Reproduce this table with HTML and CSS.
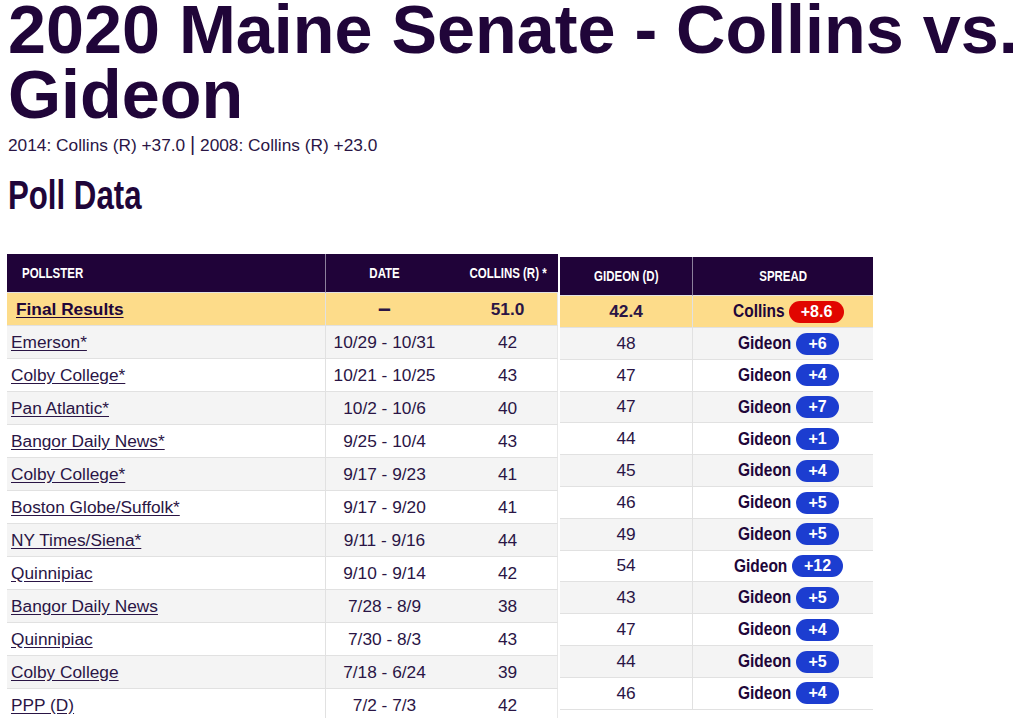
FILE: index.html
```html
<!DOCTYPE html>
<html lang="en">
<head>
<meta charset="utf-8">
<title>2020 Maine Senate - Collins vs. Gideon</title>
<link rel="stylesheet" href="styles.css">
</head>
<body>
<div class="page">
  <h1 class="title">2020 Maine Senate - Collins vs. Gideon</h1>
  <p class="history">2014: Collins (R) +37.0 <span class="bar">|</span> 2008: Collins (R) +23.0</p>
  <h2 class="section"><span class="cond">Poll Data</span></h2>

  <div class="tables">
    <table class="polls polls-left">
      <colgroup><col class="c-pollster"><col class="c-date"><col class="c-collins"></colgroup>
      <thead>
        <tr class="head"><th class="pollster"><span class="cond">POLLSTER</span></th><th class="date"><span class="cond">DATE</span></th><th class="collins"><span class="cond">COLLINS (R) *</span></th></tr>
      </thead>
      <tbody>
        <tr class="final"><td class="pollster"><a href="#">Final Results</a></td><td class="date"><span class="dash">&ndash;</span></td><td class="collins">51.0</td></tr>
        <tr><td class="pollster"><a href="#">Emerson*</a></td><td class="date">10/29 - 10/31</td><td class="collins">42</td></tr>
        <tr><td class="pollster"><a href="#">Colby College*</a></td><td class="date">10/21 - 10/25</td><td class="collins">43</td></tr>
        <tr><td class="pollster"><a href="#">Pan Atlantic*</a></td><td class="date">10/2 - 10/6</td><td class="collins">40</td></tr>
        <tr><td class="pollster"><a href="#">Bangor Daily News*</a></td><td class="date">9/25 - 10/4</td><td class="collins">43</td></tr>
        <tr><td class="pollster"><a href="#">Colby College*</a></td><td class="date">9/17 - 9/23</td><td class="collins">41</td></tr>
        <tr><td class="pollster"><a href="#">Boston Globe/Suffolk*</a></td><td class="date">9/17 - 9/20</td><td class="collins">41</td></tr>
        <tr><td class="pollster"><a href="#">NY Times/Siena*</a></td><td class="date">9/11 - 9/16</td><td class="collins">44</td></tr>
        <tr><td class="pollster"><a href="#">Quinnipiac</a></td><td class="date">9/10 - 9/14</td><td class="collins">42</td></tr>
        <tr><td class="pollster"><a href="#">Bangor Daily News</a></td><td class="date">7/28 - 8/9</td><td class="collins">38</td></tr>
        <tr><td class="pollster"><a href="#">Quinnipiac</a></td><td class="date">7/30 - 8/3</td><td class="collins">43</td></tr>
        <tr><td class="pollster"><a href="#">Colby College</a></td><td class="date">7/18 - 6/24</td><td class="collins">39</td></tr>
        <tr><td class="pollster"><a href="#">PPP (D)</a></td><td class="date">7/2 - 7/3</td><td class="collins">42</td></tr>
      </tbody>
    </table>

    <table class="polls polls-right">
      <colgroup><col class="c-gideon"><col class="c-spread"></colgroup>
      <thead>
        <tr class="head"><th class="gideon"><span class="cond">GIDEON (D)</span></th><th class="spread"><span class="cond">SPREAD</span></th></tr>
      </thead>
      <tbody>
        <tr class="final"><td class="gideon">42.4</td><td class="spread"><span class="leader">Collins</span><span class="badge rep">+8.6</span></td></tr>
        <tr><td class="gideon">48</td><td class="spread"><span class="leader">Gideon</span><span class="badge dem">+6</span></td></tr>
        <tr><td class="gideon">47</td><td class="spread"><span class="leader">Gideon</span><span class="badge dem">+4</span></td></tr>
        <tr><td class="gideon">47</td><td class="spread"><span class="leader">Gideon</span><span class="badge dem">+7</span></td></tr>
        <tr><td class="gideon">44</td><td class="spread"><span class="leader">Gideon</span><span class="badge dem">+1</span></td></tr>
        <tr><td class="gideon">45</td><td class="spread"><span class="leader">Gideon</span><span class="badge dem">+4</span></td></tr>
        <tr><td class="gideon">46</td><td class="spread"><span class="leader">Gideon</span><span class="badge dem">+5</span></td></tr>
        <tr><td class="gideon">49</td><td class="spread"><span class="leader">Gideon</span><span class="badge dem">+5</span></td></tr>
        <tr><td class="gideon">54</td><td class="spread"><span class="leader">Gideon</span><span class="badge dem">+12</span></td></tr>
        <tr><td class="gideon">43</td><td class="spread"><span class="leader">Gideon</span><span class="badge dem">+5</span></td></tr>
        <tr><td class="gideon">47</td><td class="spread"><span class="leader">Gideon</span><span class="badge dem">+4</span></td></tr>
        <tr><td class="gideon">44</td><td class="spread"><span class="leader">Gideon</span><span class="badge dem">+5</span></td></tr>
        <tr><td class="gideon">46</td><td class="spread"><span class="leader">Gideon</span><span class="badge dem">+4</span></td></tr>
      </tbody>
    </table>
  </div>
</div>
</body>
</html>
```

FILE: styles.css
```css
html, body {
  margin: 0;
  padding: 0;
  background: #ffffff;
}

body {
  font-family: "Liberation Sans", Arial, Helvetica, sans-serif;
  color: #21083a;
}

.page {
  padding: 0 0 0 7px;
}

/* condensed look: real text, horizontally narrowed */
.cond {
  display: inline-block;
  transform: scaleX(0.82);
  transform-origin: center;
}

.title {
  margin: -3px 0 0 1px;
  font-size: 68.3px;
  line-height: 65px;
  font-weight: 700;
  color: #200539;
}

.history {
  margin: 7px 0 0 1px;
  font-size: 17.3px;
  line-height: 20px;
  color: #2a1545;
}

.history .bar {
  font-size: 20px;
  font-weight: 300;
}

.section {
  margin: 20px 0 0 1px;
  font-size: 40px;
  line-height: 40px;
  font-weight: 700;
  color: #200539;
}

.section .cond {
  transform: scaleX(0.78);
  transform-origin: left center;
}

.tables {
  display: flex;
  align-items: flex-start;
  gap: 2px;
  margin-top: 39px;
}

.polls {
  border-collapse: separate;
  border-spacing: 0;
  table-layout: fixed;
  font-size: 17.3px;
  color: #2a1545;
}

.polls-left { width: 551px; }
.polls-right { width: 313px; margin-top: 3px; }

.c-pollster { width: 318px; }
.c-date { width: 118px; }
.c-collins { width: 115px; }
.c-gideon { width: 132px; }
.c-spread { width: 181px; }

.polls th,
.polls td {
  padding: 0;
  vertical-align: middle;
  text-align: center;
  white-space: nowrap;
}

.polls .head { height: 39px; }

.polls th {
  background: #200339;
  color: #ffffff;
  font-size: 14px;
  font-weight: 700;
  border-bottom: 1px solid #e2e2e2;
}

.polls th.pollster {
  text-align: left;
  padding-left: 15px;
}

.polls th.pollster .cond {
  transform-origin: left center;
}

.polls th.date,
.polls th.spread {
  border-left: 1px solid #8c809c;
}

.polls th.collins {
  padding-left: 15px;
}

.polls tbody tr { height: 33px; }
.polls-right tbody tr { height: 31.8px; }
.polls-right tbody tr.final { height: 32px; }

.polls tbody tr:nth-child(even) { background: #f4f4f4; }
.polls tbody tr:nth-child(odd) { background: #ffffff; }
.polls tbody tr.final { background: #fddc8a; }

.polls td {
  border-bottom: 1px solid #e1e1e1;
}

.polls td.pollster {
  text-align: left;
  padding-left: 4px;
}

.polls td.date {
  border-left: 1px solid #e1e1e1;
}

.polls td.collins {
  padding-left: 15px;
  border-right: 1px solid #e8e8e8;
}

.polls td.spread {
  border-left: 1px solid #e1e1e1;
  padding-left: 11px;
}

.polls a {
  color: #2a1545;
  text-decoration: underline;
  text-underline-offset: 2px;
}

.polls .final td {
  font-weight: 700;
}

.polls .final td.pollster {
  padding-left: 9px;
}

.polls .final a {
  color: #200539;
}

.dash {
  font-size: 23px;
  line-height: 1;
}

.leader {
  display: inline-block;
  font-weight: 700;
  font-size: 18px;
  color: #200539;
  vertical-align: middle;
  transform: scaleX(0.86);
  transform-origin: left center;
  margin-right: -0.5em;
}

.badge {
  display: inline-block;
  margin-left: 5px;
  padding: 0 12px;
  height: 22px;
  line-height: 22px;
  border-radius: 11px;
  color: #ffffff;
  font-size: 16px;
  font-weight: 700;
  vertical-align: middle;
}

.badge.rep { background: #e10600; }
.badge.dem { background: #1c3dd0; }
```
